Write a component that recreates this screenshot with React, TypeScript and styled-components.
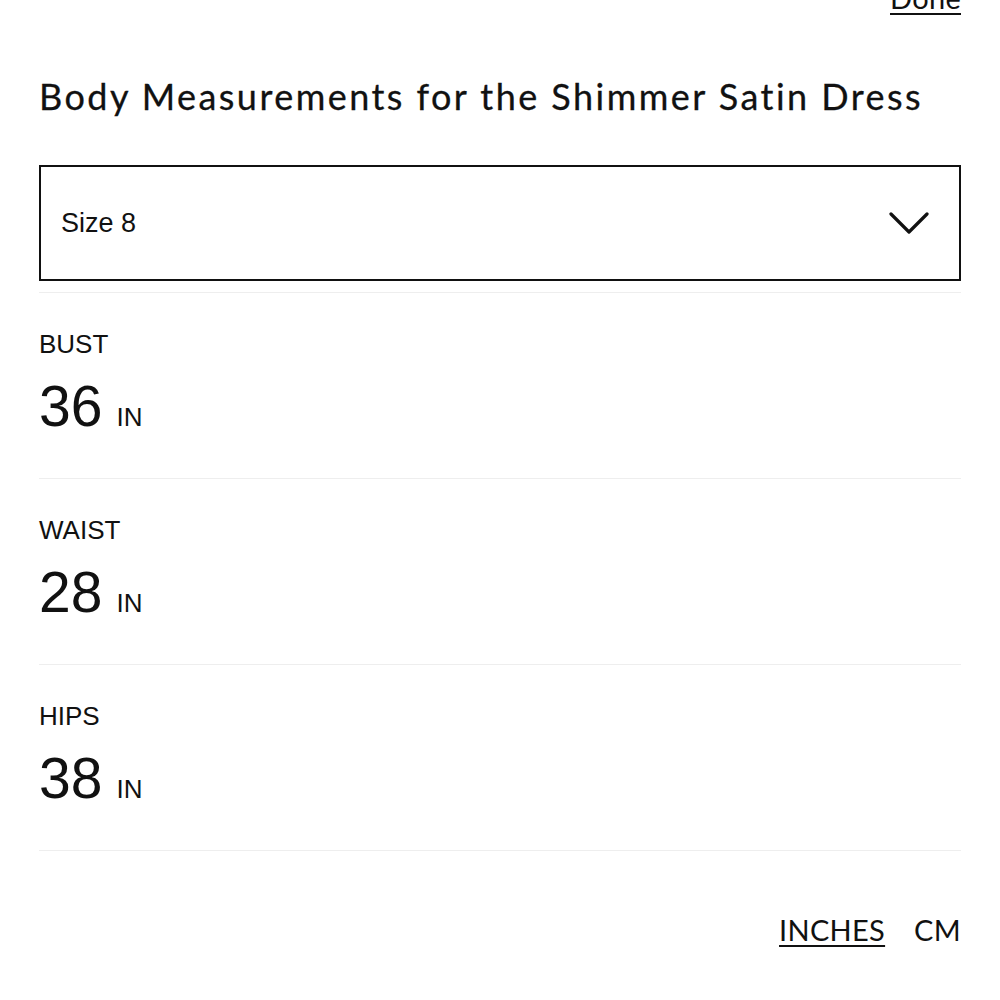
import React from "react";
import styled, { createGlobalStyle } from "styled-components";

const GlobalStyle = createGlobalStyle`
  html, body {
    margin: 0;
    padding: 0;
    background: #ffffff;
  }
  body {
    font-family: "Liberation Sans", Arial, sans-serif;
    color: #111111;
  }
`;

const geometric = `"Lato", "Noto Sans", sans-serif`;

const Page = styled.div`
  width: 1000px;
  height: 1000px;
  overflow: hidden;
  box-sizing: border-box;
  padding: 0 39px;
`;

const TopBar = styled.div`
  display: flex;
  justify-content: flex-end;
  margin-top: -22px;
  height: 40px;
`;

const TextLink = styled.button<{ $active?: boolean }>`
  border: none;
  background: none;
  padding: 0;
  font-family: ${geometric};
  font-size: 29px;
  line-height: 36px;
  letter-spacing: 0.3px;
  color: #111111;
  text-decoration: ${(p) => (p.$active ? "underline" : "none")};
  text-underline-offset: 4px;
  text-decoration-thickness: 2px;
  cursor: pointer;
`;

const Heading = styled.h1`
  margin: 56px 0 0;
  font-family: ${geometric};
  font-weight: 400;
  font-size: 36px;
  line-height: 44px;
  letter-spacing: 2.45px;
  color: #111111;
  -webkit-text-stroke: 0.3px #111111;
`;

const Select = styled.div`
  margin-top: 47px;
  box-sizing: border-box;
  height: 116px;
  border: 2px solid #111111;
  display: flex;
  align-items: center;
  justify-content: space-between;
  padding: 0 30px 0 20px;
`;

const SelectLabel = styled.span`
  font-size: 27px;
  line-height: 32px;
`;

const List = styled.div`
  margin-top: 11px;
  border-top: 1px solid #eeeeee;
`;

const Row = styled.div`
  border-bottom: 1px solid #eeeeee;
  padding: 36px 0 40px;
  height: 186px;
  box-sizing: border-box;
`;

const Label = styled.div`
  font-size: 26px;
  line-height: 30px;
  text-transform: uppercase;
`;

const Value = styled.div`
  margin-top: 17px;
  font-size: 57px;
  line-height: 60px;
  display: flex;
  align-items: baseline;
`;

const Unit = styled.span`
  font-size: 26px;
  margin-left: 14px;
`;

const Footer = styled.div`
  display: flex;
  justify-content: flex-end;
  gap: 29px;
  margin-top: 61px;
`;

const Chevron = () => (
  <svg width="40" height="24" viewBox="0 0 40 24" fill="none">
    <polyline
      points="2,3 20,21 38,3"
      stroke="#111111"
      strokeWidth="3.2"
      strokeLinecap="round"
      strokeLinejoin="round"
    />
  </svg>
);

const measurements = [
  { label: "Bust", value: 36 },
  { label: "Waist", value: 28 },
  { label: "Hips", value: 38 },
];

export default function App() {
  return (
    <>
      <GlobalStyle />
      <Page>
        <TopBar>
          <TextLink $active>Done</TextLink>
        </TopBar>
        <Heading>Body Measurements for the Shimmer Satin Dress</Heading>
        <Select>
          <SelectLabel>Size 8</SelectLabel>
          <Chevron />
        </Select>
        <List>
          {measurements.map((m) => (
            <Row key={m.label}>
              <Label>{m.label}</Label>
              <Value>
                {m.value}
                <Unit>IN</Unit>
              </Value>
            </Row>
          ))}
        </List>
        <Footer>
          <TextLink $active>INCHES</TextLink>
          <TextLink>CM</TextLink>
        </Footer>
      </Page>
    </>
  );
}
